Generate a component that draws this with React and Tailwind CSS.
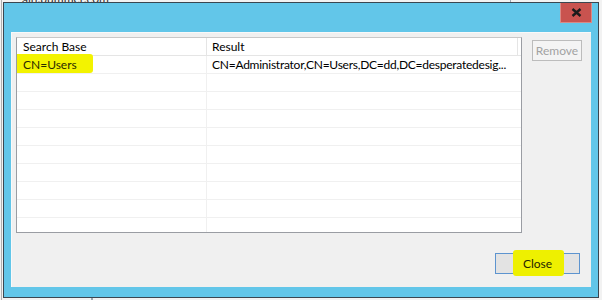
const font = { fontFamily: 'Lato, "Noto Sans", sans-serif' };

const rows = [
  { base: "CN=Users", result: "CN=Administrator,CN=Users,DC=dd,DC=desperatedesig...", mark: true },
  {}, {}, {}, {}, {}, {}, {}, {}, {},
];

function CloseX() {
  return (
    <svg width="11" height="9" viewBox="0 0 11 9">
      <path d="M1.5 1 L9.5 8 M9.5 1 L1.5 8" stroke="#1b1b1b" strokeWidth="2.4" />
    </svg>
  );
}

export default function App() {
  return (
    <div className="relative h-[300px] w-[602px] overflow-hidden bg-[#f2f2f2] text-[12px] text-black" style={font}>
      {/* desktop behind the dialog */}
      <div className="absolute left-[22px] top-[-10px] text-[12px] text-[#333]">ain.bummer.com</div>
      <div className="absolute left-[1px] top-0 h-full w-px bg-[#b0b0b0]" />
      <div className="absolute left-[91px] top-[290px] h-[10px] w-[2px] bg-[#9aa7b0]" />
      <div className="absolute left-[510px] top-0 h-[4px] w-px bg-[#9aa7b0]" />

      {/* dialog window */}
      <div className="relative ml-[3px] mt-[2px] flex h-[296px] w-[596px] flex-col border border-[#3a4650] bg-[#62c6e9]">
        <div className="flex h-[29px] shrink-0 justify-end pr-[6px]">
          <button className="flex h-[20px] w-[32px] items-center justify-center border border-[#d98a86] border-t-0 bg-[#c9534f]">
            <CloseX />
          </button>
        </div>

        <div className="mx-[7px] h-[255px] border-l border-t border-[#f9f9f9] bg-[#f0f0f0] pl-[4px] pt-[4px]">
          <div className="flex">
            {/* list view */}
            <div className="h-[196px] w-[506px] overflow-hidden border border-[#9a9da3] border-t-[#c8c8c8] bg-white">
              <div className="flex h-[18px] border-b border-[#e5e5e5]">
                <div className="w-[190px] border-r border-[#e5e5e5] pl-[6px] leading-[17px]">Search Base</div>
                <div className="w-[311px] border-r border-[#e5e5e5] pl-[5px] leading-[17px]">Result</div>
              </div>
              {rows.map((r, i) => (
                <div key={i} className="flex h-[18px] border-b border-[#f0f0f0]">
                  <div className="relative w-[190px] border-r border-[#f0f0f0] pl-[6px] leading-[17px]">
                    {r.mark && (
                      <div className="absolute left-[-2px] top-[-2px] h-[19px] w-[78px] rounded-[3px] bg-[#f3f300]" />
                    )}
                    <span className={r.mark ? "relative text-[#2b2b00]" : "relative"}>{r.base}</span>
                  </div>
                  <div className="flex-1 overflow-hidden whitespace-nowrap pl-[5px] leading-[17px] tracking-[-0.25px]">{r.result}</div>
                </div>
              ))}
            </div>

            <div className="ml-[10px] mt-[3px]">
              <button className="h-[21px] w-[50px] border border-[#bcbcbc] bg-[#f4f4f4] text-[12px] leading-[18px] text-[#a2a2a2]">
                Remove
              </button>
            </div>
          </div>

          <div className="mt-[20px] flex justify-end pr-[11px]">
            <button className="relative h-[21px] w-[85px] border border-[#5d94cf] bg-[#e3e3e3] text-[12px] leading-[18px]">
              <div className="absolute left-[17px] top-[-4px] h-[26px] w-[51px] rounded-[3px] bg-[#eef000]" />
              <span className="relative text-[#252500]">Close</span>
            </button>
          </div>
        </div>
      </div>
    </div>
  );
}
